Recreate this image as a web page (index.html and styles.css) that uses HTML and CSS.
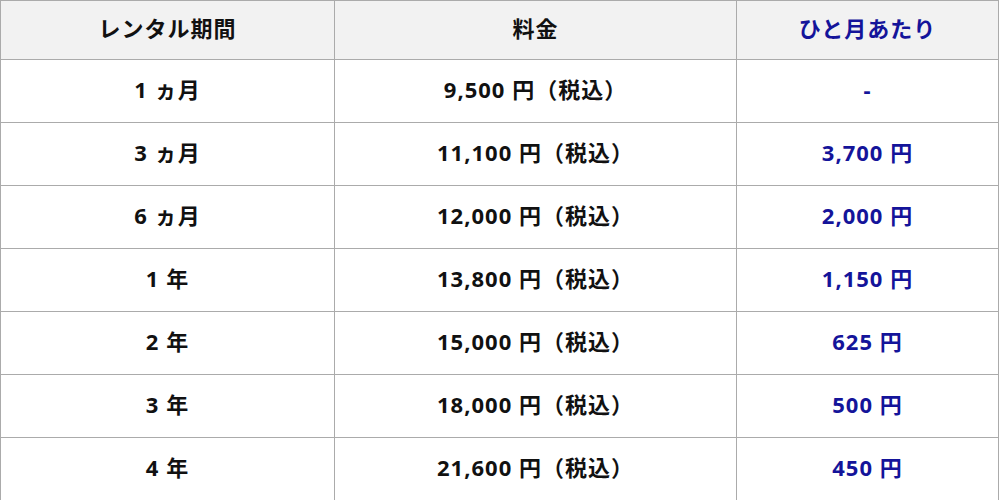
FILE: index.html
```html
<!DOCTYPE html>
<html lang="ja">
<head>
<meta charset="utf-8">
<link rel="stylesheet" href="styles.css">
</head>
<body>
<table class="price">
  <thead>
    <tr>
      <th class="c1">レンタル期間</th>
      <th class="c2">料金</th>
      <th class="c3 blue">ひと月あたり</th>
    </tr>
  </thead>
  <tbody>
    <tr><td>1 ヵ月</td><td>9,500 円（税込）</td><td class="blue">-</td></tr>
    <tr><td>3 ヵ月</td><td>11,100 円（税込）</td><td class="blue">3,700 円</td></tr>
    <tr><td>6 ヵ月</td><td>12,000 円（税込）</td><td class="blue">2,000 円</td></tr>
    <tr><td>1 年</td><td>13,800 円（税込）</td><td class="blue">1,150 円</td></tr>
    <tr><td>2 年</td><td>15,000 円（税込）</td><td class="blue">625 円</td></tr>
    <tr><td>3 年</td><td>18,000 円（税込）</td><td class="blue">500 円</td></tr>
    <tr><td>4 年</td><td>21,600 円（税込）</td><td class="blue">450 円</td></tr>
  </tbody>
</table>
</body>
</html>
```
FILE: styles.css
```css
html, body {
  margin: 0;
  padding: 0;
  background: #fff;
}
.price {
  width: 999px;
  border-collapse: collapse;
  table-layout: fixed;
  font-family: "Noto Sans", "Noto Sans CJK JP", sans-serif;
  font-weight: 700;
  font-size: 22px;
  letter-spacing: 1px;
  color: #111;
}
.price th,
.price td {
  border: 1px solid #ababab;
  text-align: center;
  vertical-align: middle;
  padding: 0 0 3px;
  line-height: 1.2;
}
.price th {
  background: #f2f2f2;
  height: 55px;
  padding-bottom: 3px;
}
.price td {
  height: 59px;
}
.c1 { width: 333px; }
.c2 { width: 401px; }
.price .blue { color: #14149a; }
```
